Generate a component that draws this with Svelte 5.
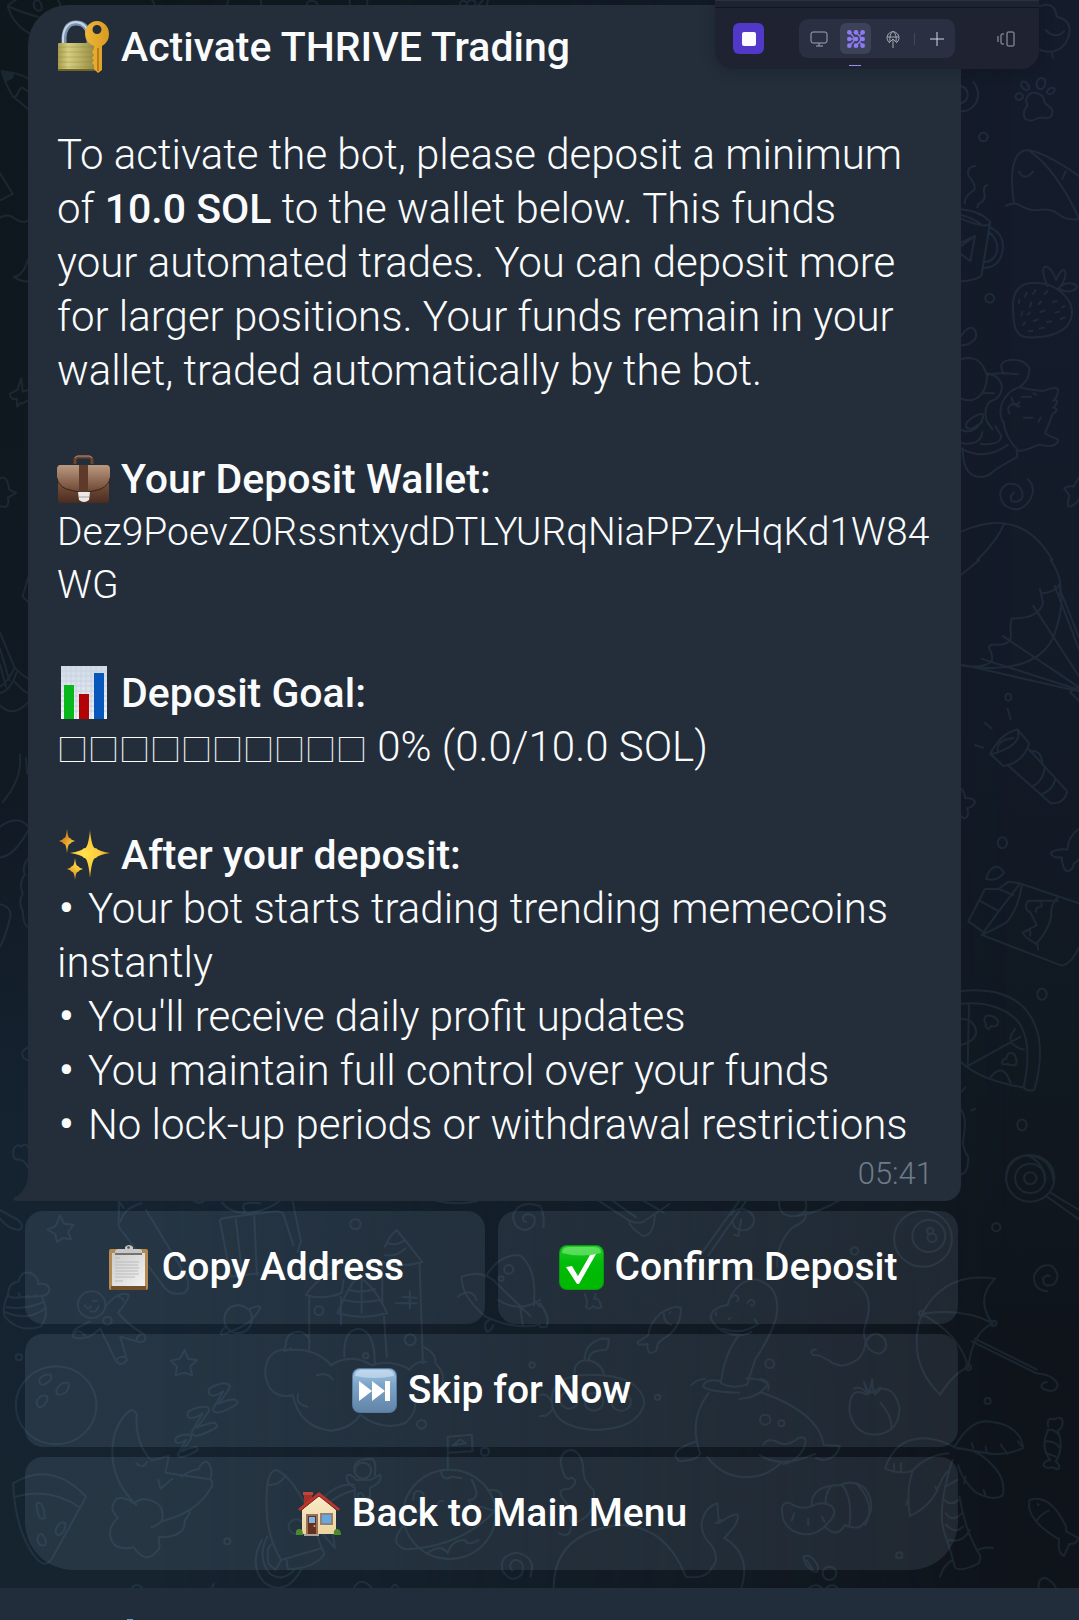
<script>
  const progress = Array(10).fill('□').join('');
  const benefits = [
    ['Your bot starts trading trending memecoins', 'instantly'],
    ["You'll receive daily profit updates"],
    ['You maintain full control over your funds'],
    ['No lock-up periods or withdrawal restrictions']
  ];
  const dots = [];
  for (const y of [2, 16, 30]) for (const x of [2, 16, 30]) dots.push([x, y]);
</script>

{#snippet clipboard()}
  <svg class="glyph" viewBox="0 0 45 45" aria-hidden="true">
    <rect x="3" y="4" width="39" height="41" rx="2" fill="#b5894f" />
    <rect x="5" y="41" width="35" height="4" fill="#74502c" />
    <rect x="6" y="8" width="33" height="33" fill="url(#paper)" />
    <path d="M9 8h27V6q0-2-3-2h-6V2q-4-4-8 0v2h-6q-4 0-4 3z" fill="#c8c9c7" />
    <path d="M9 8h27v2H9z" fill="#77736c" />
    <circle cx="22.500" cy="2.500" r="1.300" fill="#55524c" />
    <path d="M9 13h5M9 17h24M9 20h23M9 23h24M9 26h23M9 29h24M9 32h20M9 36h8" stroke="#bbb" stroke-width="1" />
  </svg>
{/snippet}

{#snippet check()}
  <svg class="glyph" viewBox="0 0 45 45" aria-hidden="true">
    <rect width="45" height="45" rx="8" fill="#0a9a12" />
    <rect x="1" y="1" width="43" height="43" rx="7" fill="url(#green)" />
    <path d="M3 8q0-6 7-6h25q7 0 7 6-20 5-39 0z" fill="#8df08a" opacity=".55" />
    <path d="M7 22l6-1 6 10L31 10l6-1L20 39h-2z" fill="#fff" />
  </svg>
{/snippet}

{#snippet skip()}
  <svg class="glyph" viewBox="0 0 45 45" aria-hidden="true">
    <rect width="45" height="45" rx="8" fill="#557ba3" />
    <rect x="1" y="1" width="43" height="43" rx="7" fill="url(#sky)" />
    <path d="M3 8q0-6 7-6h25q7 0 7 6-20 4-39 0z" fill="#e2eef8" opacity=".5" />
    <path d="M7 13l13 10L7 33zM20 13l13 10-13 10zM33 13h5v20h-5z" fill="#fff" />
  </svg>
{/snippet}

{#snippet house()}
  <svg class="glyph" viewBox="0 0 45 45" aria-hidden="true">
    <path d="M8 2h8v13H8z" fill="#a3322b" />
    <path d="M7 1h10v3H7z" fill="#c0453a" />
    <path d="M6 19L23 4l17 15v24H6z" fill="url(#wall)" />
    <path d="M2 18L23 1l21 17-2 2L23 5 4 20z" fill="#bd362d" />
    <path d="M4 20L23 5l19 15" fill="none" stroke="#7c211c" stroke-width="1" />
    <path d="M10 23h12v20H10z" fill="#96705a" />
    <path d="M12 25h8v18h-8z" fill="#65301f" />
    <path d="M13 26h6v6h-6z" fill="#78b7ea" />
    <circle cx="18.500" cy="35" r="1" fill="#e0b050" />
    <path d="M24 22h13v12H24z" fill="#94816f" />
    <path d="M26 24h9v8h-9z" fill="#64a9e4" />
    <path d="M8 43h15v2H8z" fill="#aaa198" />
    <path d="M0 44q-1-6 3-6 4-1 4 6zM38 44q-1-6 3-6 4 0 4 6z" fill="#4c8a2b" />
  </svg>
{/snippet}

<svg class="defs" aria-hidden="true">
  <defs>
    <linearGradient id="paper" x1="0" y1="0" x2="1" y2="1"><stop offset="0" stop-color="#cbcbcb" /><stop offset="1" stop-color="#f3f3f3" /></linearGradient>
    <linearGradient id="green" x1="0" y1="0" x2="0" y2="1"><stop offset="0" stop-color="#22cc28" /><stop offset=".4" stop-color="#00bb08" /><stop offset="1" stop-color="#00b800" /></linearGradient>
    <linearGradient id="sky" x1="0" y1="0" x2="0" y2="1"><stop offset="0" stop-color="#9fc2e0" /><stop offset=".4" stop-color="#7ba3c8" /><stop offset="1" stop-color="#6284a8" /></linearGradient>
    <linearGradient id="wall" x1="0" y1="0" x2="0" y2="1"><stop offset="0" stop-color="#fbecc9" /><stop offset="1" stop-color="#ecd3a0" /></linearGradient>
    <linearGradient id="leather" x1="0" y1="0" x2="0" y2="1"><stop offset="0" stop-color="#a98469" /><stop offset=".45" stop-color="#7a543e" /><stop offset="1" stop-color="#4a2c20" /></linearGradient>
    <linearGradient id="flap" x1="0" y1="0" x2="0" y2="1"><stop offset="0" stop-color="#bb9a80" /><stop offset="1" stop-color="#6e4835" /></linearGradient>
    <linearGradient id="brass" x1="0" y1="0" x2="1" y2="0"><stop offset="0" stop-color="#a89c4c" /><stop offset=".25" stop-color="#d5cd80" /><stop offset=".55" stop-color="#b8b062" /><stop offset="1" stop-color="#8d803a" /></linearGradient>
    <linearGradient id="gold" x1="0" y1="0" x2="1" y2="0"><stop offset="0" stop-color="#efb73a" /><stop offset="1" stop-color="#d89a20" /></linearGradient>
    <radialGradient id="spark"><stop offset="0" stop-color="#ffe14d" /><stop offset=".6" stop-color="#fccb38" /><stop offset="1" stop-color="#d98c25" /></radialGradient>
    <linearGradient id="grid" x1="0" y1="0" x2="0" y2="1"><stop offset="0" stop-color="#d3dae4" /><stop offset="1" stop-color="#eef2f7" /></linearGradient>
  </defs>
</svg>

<div class="screen">
  <main class="chat">
    <div class="tint"></div>
    <svg class="doodles" viewBox="0 0 1079 1588" preserveAspectRatio="xMidYMid slice" aria-hidden="true">
      <g transform="scale(.383 .333)">
        <path d="M20 18Q35 80 90 108M20 18Q60 40 100 50M20 18Q35 0 60-10M88 8q8-16 18 0 8 22-4 24-14 0-14-24M150-5l8 22M395-5l10 22M596-5q0 12-4 22M680-5l3 22M800 15q5-18 18-12 10 2 12 14M912-5l2 22M960-5l-2 22M1200 15q2-16 14-12 6 4 4 12 4-18 18-14 8 4 4 14M1250 15l10-14M1275-4l-4 20" />
        <path d="M5 215q10 40 28 74l42 40M5 215q40 2 70 22M33 289q10 4 14-10 6-20 14-14l14 10" />
        <path d="M5 215l28 5q4 18-20 22z" class="solid" />
      </g>
      <g transform="scale(.3333 .791)">
        <path d="M0 219l38 26-36 8M0 275q26-6 46 2 22 6 38 2M84 328q-14 20-42 22 20 6 42 6M30 498l22-5 12-15 4 17 16-2M30 498q0 8 20 6l2 10q10-6 16-4l16-4M0 605q20-6 28 14l20 4-24 6q4 10-8 12L0 640M84 730l-16 24 16 7M0 800l44 44q-20 18-44 24M44 844q24 10 40 14M50 850q-20 24-50 26M44 862q30 14 40 14M0 892q40 16 84-4M0 820l28 40M0 840l18 28M60 954q8 30-52 60M78 958l4 20M0 1045q54-16 84 0M84 1050q-40 32-84 34M84 1086q-18 8-10 20-18 10-6 24-14 10 0 22 2 18 16 20M0 1143q30 2 32 14-14 26-32 40M84 1324q-18 4-18 8 4 8 18 8M84 1450q-10-6-20 0-14-6-24 4-4 12 14 12 20 0 30 10" />
      </g>
      <g transform="translate(930 0) scale(.3333)">
        <path d="M325 20q50-20 55 30 45 10 38 50-10 50-58 55-20 0-30-6M347 90q30 30 55 4M365 155l4 18" />
      </g>
      <g transform="translate(930 60) scale(.3333)">
        <path d="M93 78q22 8 20 30-4 18-20 22M130 65q28 40 2 72-16 18-39 17M273 74q2-14 14-8 12 10 10 20-6 8-14 2-8-6-10-14M320 70q4-18 16-16 12 4 10 18-4 16-16 15-12-2-10-17M350 95q10-16 22-10 6 6-4 14-14 8-18-4M256 108q4-10 14-8 12 4 8 14-10 10-20 2zM288 125q0-20 20-27 32-2 38 32 24 18 22 26-2 20-22 19-16-6-28 2-16 10-32 0-10-14 2-35 8-6 0-17" />
        <circle cx="160" cy="231" r="13" /><circle cx="179" cy="715" r="13" />
        <path d="M252 430Q230 270 295 270 350 280 447 348M298 272Q380 330 447 475M228 437q30-14 50 4 22 12 42 9 40-6 60 9 30 25 67 18M267 335q18 30 42 0M407 334l-10 22M136 318q-28 2-20 30 24 30 16 42-30 20-28 40M172 376q-12 0-10 20 6 16-4 28-14 6-16 18" />
        <path d="M93 448q60 6 88 38-2 12-22 10-30-4-66-20M93 465q40 10 62 30M180 490l-26 158q-20 14-61 16M180 502q44 20 38 68-8 54-60 54M178 518q26 20 24 52-8 36-40 36M93 548l42-20-14 76-28-22M93 558l36-26" />
        <path d="M250 760Q240 670 310 668 380 668 415 720 440 760 410 800 370 835 290 832 250 830 250 760M352 678q-24-60-2-58 16 6 28 40 16-36 26-28 10 20-20 56 16-24 48-16 20 8-4 20-20 8-42-8" />
        <path d="M290 698l-5 12M317 690l-8 12M352 694l-8 8M268 720l-2 10M304 728l-4 12M334 724l-8 8M368 727l12-4M277 755l-3 12M292 764l8-6M332 756l12-5M376 758l12-3M397 742l6-4M279 795l6-8M311 783l12-4M352 786l12-2M392 777l12-4M296 814l12-2M329 806l12-3" />
        <path d="M93 828q20-30 36-23 16 14 5 33-16 18-41 18M93 898q60-18 78 50-2 60-44 72-22 2-34-4M170 940q40 6 46 40-2 28-20 38-40 10-26 66l18 24M172 946q20-10 92-3M160 998l32 2M222 942q-20-30 8-40 50-10 68 22 2 36-30 58-20 6-30 16-40 40-20 88M268 982q50 12 75 10 38-14 40-4 4 20-14 34 14-4 12 4-4 14-12 16 16 4 8 14-12 4-14 20l-18 44q24 14 36 16 10 14-18 22-20 0-36-4-50 22-62 18-40-40-44-86" />
        <path d="M275 1010h28M282 1073h26M332 1073l-6 12M310 1000l10 4M238 1060q-10-20 10-28l20 8M245 1014q4 20 14 18 8 0 8-6M93 1110q30 12 50-10 20-24 16-38-20-2-48 24-10 24 16 20l30-20M93 1150q60 8 64-34M93 1165q70 40 140-10M98 1165q0 90 60 86 18-2 36-20 30-20 68-40l-2-18M152 1152q60 4 62-24l-18-30" />
        <path d="M294 1258q30 30 0 70-30 36-70 8-30-40 8-64 44-6 46 36-6 22-32 16-10-16 6-26M447 1252l-16 28q-20-4-28 6l16 22q-8 18-4 32 16 0 32-22M93 1415q180-80 274 85M222 1392q-20 50-80 108" />
      </g>
      <g transform="translate(930 560) scale(.3333 .3954)">
        <path d="M93 38L148 0M362 0q40 50 26 90M330 74q0 10 10 10 40-4 48-24 20 50-18 136-60 100-277 70 60 10 90-8 10-10-6-36 0-10 20-8 46 2 46-24-4-26 2-42 30 0 56-6 34-12 38-34-4-16-9-34M93 264l354 68M155 250l292 78M218 192l229 130M310 116l137 178M374 66l73 160M386 66l61 130M420 334l27-14M420 334l27 22" />
        <circle cx="235" cy="347" r="9" /><circle cx="217" cy="715" r="14" /><circle cx="336" cy="1098" r="14" /><circle cx="276" cy="1429" r="14" />
        <path d="M233 376l9 27M165 412l20 14M135 468l24 6M181 490Q210 440 262 428l36 36q-20 50-78 57zM262 428q20 40-80 64M204 486q-10-30 46-36M236 521l126 94q40 4 50-30l-116-107M300 484q34-6 38 34M308 572q30-10 36-46M332 594q40-14 44-42M93 578q12 10 12 24 30 0 30 12-10 12-24 14 10 20-8 26l-10-6M447 680q-34 20-34 52-36-2-50 8 0 14 32 12 4 34 18 35 18-4 18-18l16-12" />
        <path d="M168 806q12-32 36-30 14 6 18 16-26 24-54 14M115 914l50-82h40l30-18q10 0 35 4L447 868M115 914l40 24M150 862l56 26M206 832l44 15M270 818l-65 72-50 58 240 78q20-4 34-20l18-26M276 820q-10 60-46 96-30 16-75 32M384 852q-24 20-20 50-10 34-42 66l2 18M384 862h-90q-16 20 8 30l18 32-42 18 10 12 36 20M320 862q20 0 14 14-20 4-16 14M286 940q20-10 14 10" />
        <path d="M93 1090q200-16 234 120 10 60-14 130-20 6-32-6 30-120-20-170-60-50-168-42M93 1270q60 46 188 64M117 1124l-4 156 158-74M93 1160q40 0 46 34-6 26-46 32M256 1186q-30 30 2 44 12 8 24 8M182 1308q36-40 60 14M163 1166q0-20 24-12 24 8 14 22-10 6-18 2-6 14-16 2 2-8-4-14M216 1270q4-10 12-8 4-20 22-14 16 18 6 30-20 0-22-4-20 4-18-4M96 1344l10-10M124 1392l12-4M93 1390q20 20 6 80 0 20 16 40 0 40-22 44M228 1568q0-60 66-62 70 6 76 62M294 1506q50 20 50 62" />
      </g>
      <g transform="translate(0 1180) scale(.3444 .3333)">
        <path d="M0 90l50 28q24 20 6 32-30 0-56-34M345 64v50q-4 30 10 40l120 165q20 30 60 20 20-16 6-50L424 90M350 125q10-40 60-55M345 64l14 20M640 130l30 160 80-10M640 130q-6-12 10-16l150-20q20 0 24 12l28 90M685 118l18 165M738 105l8 180M850 65l24 120-10 30M645 68q20 30 70 32-30-40 40-30M720 100q60-10 90-36M564 62q14 12 28 0M1265 62q60 14 120 2" />
        <path d="M174 106l12 25 28 3-16 22 8 22-24-4-16 12-6-24-22-14 24-10zM536 510l10 26 26 4-20 20 6 26-22-8-26 8 4-26-18-18 26-6z" />
        <path d="M24 340q0-30 30-36 10-40 44-20 16 14 12 28 30-4 34 16-4 20-24 20l-60 4q-40 6-36-12M24 340q-20 50-10 70 40 50 104 30 30-40 2-92M20 382q60 8 108-18M14 396q70 30 118-12M54 340q6 4 2 10M80 348v4M105 346v4" />
        <circle cx="266" cy="374" r="40" /><circle cx="312" cy="422" r="12" /><circle cx="163" cy="676" r="117" /><circle cx="55" cy="532" r="9" /><circle cx="1032" cy="133" r="15" /><circle cx="926" cy="392" r="13" /><circle cx="1191" cy="479" r="16" /><circle cx="1062" cy="527" r="8" /><circle cx="1224" cy="733" r="13" /><circle cx="660" cy="1084" r="9" /><circle cx="1408" cy="815" r="12" /><circle cx="1545" cy="555" r="8" />
        <path d="M305 380q40-50 68-36 4 10-30 54 20 30 76 66 10 24-14 22l-56-16 20 70q-20 24-34 0l-44-94q-40 40-78 26-4-20 12-28l36-20M246 376q10 18 18 2M262 394q20 6 24-16M270 364l12-2M338 348q20 4 20 14M396 484q0-18 16-22M338 538q10-12 28-6M216 460q14-14 30 6" />
        <path d="M652 410q8-36 44-34 38 8 36 44-6 36-42 40-42-8-38-50M724 386q40-14 30 0-20 50-110 78-10-4 14-26" />
        <path d="M888 345q40-60 90-70M888 345q50 16 104-6l6-40M898 350v166M990 350v84M980 400q30-80 60-110M1040 290q50 30 84 110-70 20-144 0M1000 360q40 12 104 0M1015 330q30 10 74-2M1050 300v100M1118 200q10-30 34-50 40 50 74 96-60 20-116 0M1125 190q30 8 50-10M1118 225q30 8 60-20M1110 250v120M1218 250l10 300M1115 410l8 120M1000 530q-4-84 44-84 46 10 44 110M1150 370h60M1170 350l40 4M1190 335v50" />
        <path d="M770 580q0-80 80-70 60-8 114 46M845 505q-30 20-15-10 0-40 40-40 24 6 30 30M770 580q10 80 80 66 20 96 110 106 60-6 86-48 60 50 130 26 40-40 26-70M866 642q-10 30 26 38M920 586q30-10 46 12M960 556q60-40 120 0 50-20 110 12M1228 500q40 20 36 50 40 40 10 80M1188 570q20-30 50-24" />
        <path d="M114 600q10-20 32-16 10 10-8 24-22 16-24-8M164 630q10-24 34-22 6 12-6 28-30 20-28-6M106 666q10-24 30-18 6 12-8 28-20 14-22-10" />
        <path d="M396 975q-90-90-64-210 20-60 50-75 20 6 14 26 0 80 44 126l50-14-10 50 130 20q14 10 0 30-40 70-140 96M396 850q20 20 30-4M460 900l6 26 34-30M526 890q30-20 50-22 14-30 28-20 16 20 6 52M390 970q-60-40-64 20 8 16 16 24-40 40-10 80 20 16 56 8 40 60 76 0l-4-30q80 0 76-50 16-20 14-26M390 970q20-20 50-8 40 14 30 60-10 14-30 20" />
        <path d="M512 772q16-10 38-8 8 4 4 12-14 24-26 38 20-12 40-14 10 6 4 12-26 16-46 20-12-4-8-12l22-40q-16 12-28 8-6-6 0-16M548 694q20-14 52-14 10 6 6 14-18 30-36 50 26-14 52-16 12 6 6 14-34 22-60 26-16-4-10-14l30-54q-20 16-38 14-10-8-2-20M608 626q22-16 50-16 12 6 8 14-16 30-34 48 24-12 50-14 12 6 6 14-32 22-58 26-16-4-10-14l28-50q-20 16-36 12-10-8-4-20" />
        <path d="M38 910q110-70 212 40l-96 180q-20 40-50 4-60-80-66-224M46 950q100-30 188 34M106 970q20-10 24 44-20 14-24-44M162 1050q10-30 28-20 0 30-22 36-8-8-6-16M108 1080q6-30 20-10 10 20 2 26-16 4-22-16" />
        <path d="M776 1020q-10-150 26-150 50 20 100 140l34 100M776 1020q10 70 40 120l120-36M776 914q30 6 54-26M816 1140l-16 30-20-18q-10-50 10-60M832 1140l4 28q80-4 106-46l-8-20M936 1060l36 44q-4-60-26-80M760 1080q-40 80 10 130 60 40 104-40M776 1070q-30 60 6 110 40 30 76-14M934 960q40-50 94-46M950 974q30-30 80-44" />
        <circle cx="860" cy="1040" r="22" /><circle cx="1054" cy="872" r="24" /><circle cx="1305" cy="1003" r="134" />
        <path d="M1030 876q-10-40 50-40 14 10 8 50M1034 900h42l28-16q10 20-30 40v30h-44v-30q-30-20-22-38 10-6 26 14M1040 950q-4-14 10-10 10 10 4 14M1300 870V770l70-6 2 50-70 4M1316 796l20-18 16 12zM1420 930q60-4 20 60-100 110-260 118-60-16 0-80M1280 876q10 30 30 14l30 4M1370 900q30 60-10 60 10 30 40 20 40 20 40 0M1240 1120q40-30 60 0 10-40 50-40 10 20 40 0M1200 960q0-40 30-20 0 40-20 60M1270 980q0-20 16-16" />
        <path d="M1340 290q50-20 90 8l110 110M1340 290q0 60 70 120 80 40 158 24M1410 290q40-70 100-64 50 40 40 150M1446 360q60 40 122 0M1330 350q40-30 54 10M1420 420q-20 10-6 36 14-4 18-20M1510 376l8 60M1550 360l18 20" />
        <circle cx="1477" cy="268" r="13" /><circle cx="1455" cy="296" r="7" />
        <path d="M1568 78q-60-20-78 26 0 44 38 46 30-8 24-38-20-20-34 0 0 12 10 14M1540 1190q20-60-40-72-54 10-40 56 26 40 56 8 10-44-24-42-20 20-4 32M384 1222q12-14 28 0M616 1222l4-10M1028 1222q20-34 50 0M1138 1222q8-16 18 0" />
      </g>
      <g transform="translate(540 1180) scale(.3438 .3333)">
        <path d="M0 78q14 24 10 64M170 62l90 60q20 10 40 4l76-54M210 62l70 50M300 62l60 36M260 122q-4 16 40 46 30 0 34-60M580 62L470 220M600 62L490 226M556 105q10-20 30-18 40 6 36 40-10 30-44 22-20-10-18-30M585 118l-8 50-12-4M695 64q0 50 50 44 40-12 26-48M745 108q70-10 130-50M776 95q0 30-40 46-50 50-46 120" />
        <circle cx="1114" cy="176" r="84" /><circle cx="1131" cy="168" r="48" /><circle cx="1135" cy="153" r="9" /><circle cx="1140" cy="173" r="13" /><circle cx="1327" cy="142" r="12" /><circle cx="915" cy="213" r="11" /><circle cx="1302" cy="663" r="9" /><circle cx="1320" cy="430" r="8" /><circle cx="1246" cy="562" r="8" /><circle cx="1110" cy="400" r="8" /><circle cx="668" cy="551" r="13" /><circle cx="342" cy="652" r="8" /><circle cx="655" cy="719" r="15" /><circle cx="702" cy="730" r="9" /><circle cx="1045" cy="1126" r="9" /><circle cx="842" cy="1180" r="20" />
        <circle cx="1426" cy="-5" r="70" /><circle cx="1426" cy="-5" r="44" /><circle cx="1426" cy="-5" r="18" />
        <path d="M1484 38l84 52M1472 48l96 70M1475 334q-40-4-38-46 16-40 52-30 30 30 4 56-30 10-30-18 10-14 20-8" />
        <path d="M1110 402q70-130 214-106-60 60-8 134-60 30-70 132-40 14-82 82-100-100-54-242M1110 402q120-20 208 28M1110 402q110 60 136 160M1256 484l188 96q50 4 62 34-6 30-44 12-10-16 12-20M1264 476l180 92" />
        <path d="M130 342q10 20 4 40 10 10 20-4 14 10 24 4-4-30-20-26l4-14M0 370q30 40 20 70l-20 2M350 400q50-30 60-14 0 60-54 92l-14 14q0 30-24 26-10-20-4-26-40 6-28-8 20-10 30-20 0-30 34-64M360 400q0 30 22 34M378 396v2" />
        <path d="M526 610q10-90 54-146-60 0-84-50 0-30 50-40 20-70 80-76 80 20 60 120-20 60-60 120l-24 76q-40 14-76-4M512 400v6M548 418l6-4M530 446q60 20 104-14l-10-14M550 462q40 10 64-6M560 350q14-10 18 6l-4 8M604 368q10-16 20-2 0 14-10 10M526 604q-40-10-50 10-10 20 104 24M600 595q60 4 60 20-20 36-80 42M440 616q10-16 40-20M640 596q30 6 24 34M490 640q-60 80-24 180-4 20-60 24-40-30 50-60M640 636q170 60 186 160l46 2q-10 40-50 42l-20-6M486 830q50 70 130 60 40 0 84-40M640 826q60 40 160-4M650 794q10-20 36-10 30 20 66-10 30-10 16 30-20 40-60 48" />
        <path d="M915 305q60 40 34 120-14 40 0 60 20-40 50-12 20 30-10 48-40-4-42-44 0 70-70 80-30-6-34-14l-34-18q-20 4-20-8 4-10 14-8M950 644q-50-30-50 50 14 70 74 70 70-4 72-80-20-90-96-40M912 626q20-10 40 14l-10-34 16 34 8-42 4 40 20-16q0 10-16 22M990 668q40 50 30 80" />
        <path d="M100 580q0-40 40-40 40 10 46 44M130 540q0-50 50-64h20q0 30-10 34-50 0-48 32M34 660q0-76 110-76 150 0 160 86-20 80-150 80-120-10-120-90M34 666q-14-30-34-20M34 690q-10 20-34 18" />
        <circle cx="85" cy="660" r="26" /><circle cx="157" cy="665" r="27" /><circle cx="236" cy="665" r="28" />
        <path d="M60 850q0-40 34-40 30 10 32 60 0 36 30 60 10 80-60 100-10-4-10-24 0-30-20-50-20-30 20-30 30-20 6-34-20 20-32-42M56 1060q30 16 34-18M40 1224q0-170 200-190 130 10 184 156M424 1190q60 10 78-30 20-20 0-60-40-40-30-80 10-40 44-50l4 60q40-30 54-26 10 20-38 70 80 50 50 150M510 1030l16-10M424 1190l-6-16" />
        <path d="M708 1020q-14-60 20-50 30 20 60 10 30-20 60-2 20 20-10 50-30 40-74 34-40-6-56-42M790 976q0-60 80-60 40-20 76 10 40 60-10 110-10 14-50 0-20 40-56 6M880 916q30 40 20 120M920 910q60 66 26 124M850 916q-20 20-20 56M740 1000l-8 22M780 1016v20M820 1010l8 16" />
        <path d="M1004 866q30-100 130-90 40 6 80 30M1004 866q50 20 80 6M1084 872q-20 60-8 136 60-30 80-80 20-50 34-56M1030 852v22M1050 850v26M1084 872q40-46 104-52M1206 800q50-90 110-74 80 10 90 78-40 20-90 18-60-10-100-18M1256 790l4 14M1296 800l4 18M1340 794l20 28M1390 784l10 14M1216 806q60 0 100 50 40 40 30 90-30 20-80-10-40-40-50-80M1238 890l-4 20M1290 930l6 16M1200 840q-50 160-20 230 20 60 26 90 10 20 70-10 10-20 0-30-40-70-56-170M1180 920l34-20M1176 960q20 20 40 0M1180 1000q20 30 46 0M1180 1034q30 30 50 6M1190 1080q40 10 60-30M1274 1110q20-10 44-6M1200 1140q-30 20-36 50M1070 960l-4 14M1150 920l6 14" />
        <path d="M1478 740q-6-30 18-22 24-12 24 8 0 20-14 26 20 50-6 92 20 20 2 24-10-8-16-6-12 6-22-6 2-14 20-16-30-40-6-90M1476 750q20-4 34 16M1472 784q30 0 40 20M1474 820l26 10M1424 960q60-20 106 80v14l36 20q-4 20-26 18l-16 36q-20-10-14-50-100-60-86-118M1446 1020q14-20 34-28M1448 972l2 4M766 1130q20-10 38 20 10 20 0 26-30-6-38-46M775 1140l20 30M784 1222q20-12 34 0M834 1222q16-12 30 0M1450 1222q0-30 20-28 20 10 30 28" />
      </g>
    </svg>

    <article class="bubble">
      <h1 class="heading">
        <svg class="emoji" viewBox="0 0 53 54" aria-hidden="true">
          <path d="M7 26V18Q8 3 19 3q12 0 13 15v8" fill="none" stroke="#7f93ad" stroke-width="5" />
          <path d="M6 25V18Q7 3 19 2q11 1 13 14" fill="none" stroke="#c5d5e9" stroke-width="2" />
          <rect x="1" y="23" width="41" height="28" rx="1" fill="url(#brass)" />
          <path d="M1 27h41M1 32h41M1 37h41M1 42h41M1 47h41" stroke="#7d7434" stroke-width="1" opacity=".3" />
          <path d="M1 49h41v2H1z" fill="#6e6429" />
          <path d="M40 1a12 13 0 0 1 12 13q0 8-7 12v24l-4 3-4-4v-4l-2-2 2-3-2-2 2-3-2-3 2-3v-3q-9-4-9-12A12 13 0 0 1 40 1zm0 4a4 4 0 1 0 0 9 4 4 0 0 0 0-9z" fill="url(#gold)" fill-rule="evenodd" />
          <path d="M41 28v23" stroke="#b87d17" stroke-width="2" />
        </svg>
        Activate THRIVE Trading
      </h1>
      <p class="para">
        To activate the bot, please deposit a minimum<br />of <strong>10.0 SOL</strong> to the wallet below. This funds<br />your automated trades. You can deposit more<br />for larger positions. Your funds remain in your<br />wallet, traded automatically by the bot.
      </p>

      <section>
        <h2 class="heading">
          <svg class="emoji" viewBox="0 0 53 54" aria-hidden="true">
            <path d="M18 12V8q0-3 3-3h11q3 0 3 3v4" fill="none" stroke="#6b4531" stroke-width="3" />
            <path d="M18 6q1-2 3-2h11q2 0 3 2" fill="none" stroke="#b28c70" stroke-width="1" />
            <rect x="1" y="13" width="51" height="38" rx="3" fill="url(#leather)" />
            <path d="M0 25V17q0-4 4-4h45q4 0 4 4v8q0 7-9 11-17 7-35 0-9-4-9-11z" fill="url(#flap)" />
            <path d="M0 26q1 7 9 11 18 6 35 0 8-4 9-11" fill="none" stroke="#3e241a" stroke-width="1" />
            <path d="M22 13h9v27h-9z" fill="#5d3a2a" />
            <path d="M21 40h12l-1 8q-5 4-10 0z" fill="#eceae8" /><path d="M22 45h10" stroke="#aaa29c" stroke-width="1" />
          </svg>
          Your Deposit Wallet:
        </h2>
        <p class="address">Dez9PoevZ0RssntxydDTLYURqNiaPPZyHqKd1W84<wbr />WG</p>
      </section>

      <section>
        <h2 class="heading">
          <svg class="emoji" viewBox="0 0 53 54" aria-hidden="true">
            <path d="M4 0h46v53H4z" fill="url(#grid)" />
            <path d="M4 5h46M4 10h46M4 15h46M4 20h46M4 25h46M4 30h46M4 35h46M4 40h46M4 45h46M9 0v53M14 0v53M19 0v53M24 0v53M29 0v53M34 0v53M39 0v53M44 0v53" stroke="#c6d2e2" stroke-width="1" />
            <path d="M7 19h10v34H7z" fill="#08b81a" /><path d="M22 28h10v25H22z" fill="#b40306" /><path d="M37 7h10v46H37z" fill="#0757bd" />
          </svg>
          Deposit Goal:
        </h2>
        <p class="goal"><span class="cells">{progress}</span> 0% (0.0/10.0 SOL)</p>
      </section>

      <section>
        <h2 class="heading">
          <svg class="emoji" viewBox="0 0 53 54" aria-hidden="true">
            <path d="M33 2q2 20 6 18 2 3 14 5-12 2-14 5-4-1-6 20-2-21-6-20-2-3-14-5 12-2 14-5 4 2 6-18zM10 1q1 10 3 9 1 2 5 3-4 1-5 3-2-1-3 9-1-10-3-9-1-2-5-3 4-1 5-3 2 1 3-9zM18 30q1 9 3 8 1 2 5 3-4 1-5 3-2-1-3 8-1-9-3-8-1-2-5-3 4-1 5-3 2 1 3-8z" fill="url(#spark)" />
          </svg>
          After your deposit:
        </h2>
        <ul>
          {#each benefits as parts}
            <li><span class="dot">•</span>{#each parts as part, i}{#if i}<br />{/if}{part}{/each}</li>
          {/each}
        </ul>
      </section>
      <time>05:41</time>
      <svg class="tail" viewBox="0 0 16 32" aria-hidden="true"><path d="M16 0q-1 22-14 28-4 4 2 4h12z" /></svg>
    </article>

    <div class="keyboard">
      <div class="pair">
        <button type="button">{@render clipboard()}Copy Address</button>
        <button type="button">{@render check()}Confirm Deposit</button>
      </div>
      <button type="button">{@render skip()}Skip for Now</button>
      <button type="button" class="last">{@render house()}Back to Main Menu</button>
    </div>
  </main>
  <footer><span class="hint"></span></footer>

  <div class="toolbar">
    <button type="button" class="stop" aria-label="Stop"><span></span></button>
    <div class="modes">
      <button type="button" aria-label="Screen">
        <svg viewBox="0 0 18 18"><rect x="1" y="2" width="16" height="11" rx="2" /><path d="M9 13v3M6 16h7" /></svg>
      </button>
      <button type="button" class="active" aria-label="Effects">
        <svg viewBox="-3 -3 38 38">
          {#each dots as [x, y]}<circle class="bead" cx={x} cy={y} r="5" />{/each}
          <path class="link" d="M2 2l7 7M16 2l8 8q4 6 0 12l-8 8M2 16h6q5 0 8 0M9 9q2 5 7 7-5 2-7 7l-7 7M30 2l-5 6M30 30l-5-6" />
        </svg>
      </button>
      <button type="button" aria-label="Publish">
        <svg viewBox="0 0 18 18"><path d="M6 13A6 6 0 1 1 12 13M3 7h12M9 1q-4 3-3 11M9 1q4 3 3 11M9 18V9M6 12l3-3 3 3" /></svg>
      </button>
      <span class="divider"></span>
      <button type="button" aria-label="Add">
        <svg viewBox="0 0 18 18" class="plus"><path d="M9 2v14M2 9h14" /></svg>
      </button>
    </div>
    <button type="button" class="side" aria-label="Side panel">
      <svg viewBox="0 0 18 18"><rect x="10" y="2" width="7" height="14" rx="1" /><path d="M7 4H5q-1 0-1 1v8q0 1 1 1h2M1 6v6" /></svg>
    </button>
  </div>
</div>

<style>
  :global(body) { margin: 0; background: #212d3b; }
  .screen { position: relative; min-height: 100vh; overflow: hidden; display: flex; flex-direction: column; font-family: Roboto, "Liberation Sans", sans-serif; color: #fafbfc; }
  .defs { position: absolute; width: 0; height: 0; }
  .chat { position: relative; padding: 5px 118px 18px 28px; background: linear-gradient(#0e171c, #111923 50%, #152331 72%, #162430); }
  .tint { position: absolute; inset: 0; background: linear-gradient(#141b2b, #131a28 40%, #101820 68%, #0f141b 85%); mask-image: linear-gradient(to right, transparent 15%, #000 95%); }
  .doodles { position: absolute; inset: 0; width: 100%; height: 100%; fill: none; stroke: #6f9cb8; stroke-width: 2; stroke-linecap: round; stroke-linejoin: round; opacity: .12; }
  .doodles path, .doodles circle { vector-effect: non-scaling-stroke; }
  .doodles .solid { fill: #6f9cb8; }

  .bubble { position: relative; background: #232e3a; border-radius: 40px 16px 16px 0; padding: 15px 28px 5px 29px; font-size: 42px; line-height: 54px; font-weight: 350; }
  .tail { position: absolute; left: -15px; bottom: 0; width: 16px; height: 32px; fill: #232e3a; }
  .heading { display: flex; align-items: center; gap: 11px; margin: 0; font-size: 41px; line-height: 54px; font-weight: 500; white-space: nowrap; }
  .emoji { flex: none; width: 53px; height: 54px; }
  p { margin: 0; }
  .para { margin: 54px 0; }
  strong { font-size: 41px; font-weight: 500; }
  .address { font-size: 39px; line-height: 53px; }
  section + section { margin-top: 54px; }
  .goal { line-height: 54px; }
  .cells { font: 300 31px/1 "Noto Sans CJK JP", sans-serif; }
  ul { list-style: none; margin: 0; padding: 0; }
  .dot { display: inline-block; box-sizing: border-box; width: 31px; padding-left: 2px; font-weight: 500; }
  time { display: block; text-align: right; font-size: 31px; line-height: 44px; color: #6e7b88; }

  .keyboard { position: relative; display: grid; gap: 10px; margin: 10px 3px 0 -3px; }
  .pair { display: grid; grid-template-columns: 1fr 1fr; gap: 13px; }
  .keyboard button { display: flex; align-items: center; justify-content: center; gap: 11px; height: 113px; padding: 0; border: 0; border-radius: 18px; background: rgb(170 200 230 / .11); color: #fff; font: 500 39px/1 Roboto, sans-serif; }
  .keyboard .last { border-radius: 18px 18px 48px 48px; }
  .glyph { width: 45px; height: 45px; }

  footer { position: relative; flex: 1; min-height: 32px; background: #212d3b; overflow: hidden; }
  .hint { position: absolute; left: 127px; bottom: 0; width: 6px; height: 1px; background: #55a5dc; }

  .toolbar { position: absolute; top: 0; right: 40px; display: flex; align-items: center; box-sizing: border-box; width: 324px; height: 69px; padding: 8px 18px 0; border-radius: 0 0 18px 18px; background: linear-gradient(#2b3040 1px, #1e2331 1px 7px, #12151f 7px 8px, #1e2231 8px); box-shadow: 0 2px 14px rgb(10 14 24 / .25); }
  .toolbar button { display: grid; place-items: center; position: relative; width: 31px; height: 31px; padding: 0; border: 0; border-radius: 6px; background: none; }
  .toolbar svg { width: 18px; height: 18px; fill: none; stroke: #a3a6b0; stroke-width: 1; }
  .toolbar .stop { background: #5238c8; }
  .stop span { width: 14px; height: 14px; border-radius: 2px; background: #fafaff; }
  .modes { display: flex; align-items: center; gap: 6px; box-sizing: border-box; height: 39px; margin-left: 35px; padding: 0 3px 0 4px; border-radius: 9px; background: #2b2f42; }
  .toolbar .active { background: #3c4258; }
  .active::after { content: ""; position: absolute; bottom: -12px; left: 9px; width: 12px; height: 1px; background: #9b8cf5; }
  .toolbar .bead { fill: #8f7bf5; stroke: none; }
  .toolbar .link { stroke: #8f7bf5; stroke-width: 3; }
  .toolbar .plus { stroke: #d5d7de; }
  .divider { width: 1px; height: 12px; background: #41465a; }
  .toolbar .side { margin-left: auto; }
</style>
